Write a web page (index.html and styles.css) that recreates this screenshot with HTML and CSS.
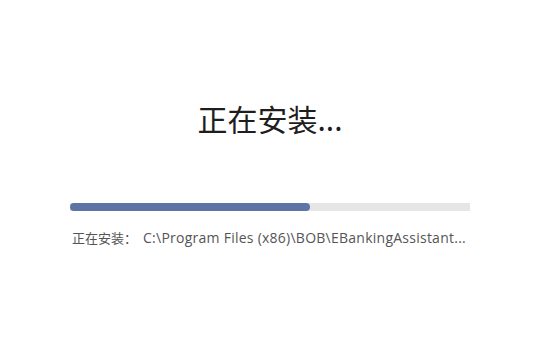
FILE: index.html
```html
<!DOCTYPE html>
<html lang="zh-CN">
<head>
<meta charset="utf-8">
<link rel="stylesheet" href="styles.css">
</head>
<body>
<div class="page">
  <h1 class="title">正在安装...</h1>
  <div class="progress">
    <div class="track"><div class="fill" style="width:60%"></div></div>
    <div class="status"><span class="label">正在安装：</span><span class="path">C:\Program Files (x86)\BOB\EBankingAssistant...</span></div>
  </div>
</div>
</body>
</html>
```
FILE: styles.css
```css
html, body {
  margin: 0;
  padding: 0;
  background: #ffffff;
}
body {
  width: 540px;
  height: 360px;
  overflow: hidden;
  font-family: "Open Sans", "Noto Sans CJK SC", sans-serif;
}
.page {
  display: flex;
  flex-direction: column;
  align-items: center;
  padding-top: 98px;
}
.title {
  margin: 0;
  font-family: "Noto Sans CJK SC", sans-serif;
  font-weight: 400;
  font-size: 30px;
  line-height: 40px;
  color: #1e1e1e;
}
.progress {
  width: 400px;
  margin-top: 65px;
  display: flex;
  flex-direction: column;
  gap: 18px;
}
.track {
  height: 8px;
  background: #e6e6e6;
}
.fill {
  height: 100%;
  background: #5d75a4;
  border-radius: 4px;
}
.status {
  padding-left: 2px;
  font-size: 13px;
  line-height: 18px;
  color: #555555;
  white-space: nowrap;
}
.label {
  font-family: "Noto Sans CJK SC", sans-serif;
  font-size: 13px;
}
.path {
  margin-left: 6px;
  font-size: 14px;
  letter-spacing: 0.25px;
}
```
